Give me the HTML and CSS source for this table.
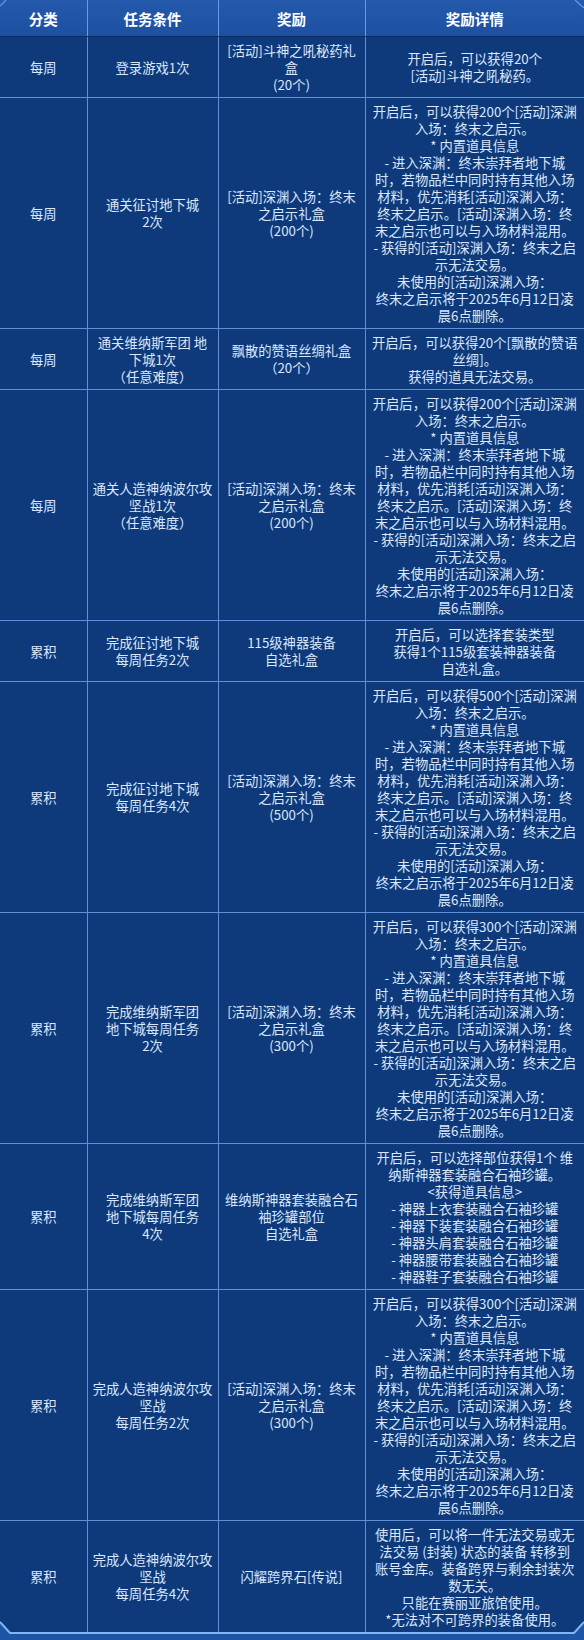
FILE: index.html
```html
<!DOCTYPE html>
<html lang="zh-CN">
<head>
<meta charset="utf-8">
<title>奖励列表</title>
<link rel="stylesheet" href="styles.css">
</head>
<body>
<div class="frame">
  <table class="rewards">
    <colgroup>
      <col class="c-cat">
      <col class="c-cond">
      <col class="c-reward">
      <col class="c-detail">
    </colgroup>
    <thead>
      <tr>
        <th>分类</th>
        <th>任务条件</th>
        <th>奖励</th>
        <th>奖励详情</th>
      </tr>
    </thead>
    <tbody>
      <tr>
        <td>每周</td>
        <td>登录游戏1次</td>
        <td>[活动]斗神之吼秘药礼<br>盒<br>(20个)</td>
        <td>开启后，可以获得20个<br>[活动]斗神之吼秘药。</td>
      </tr>
      <tr>
        <td>每周</td>
        <td>通关征讨地下城<br>2次</td>
        <td>[活动]深渊入场：终末<br>之启示礼盒<br>(200个)</td>
        <td>开启后，可以获得200个[活动]深渊<br>入场：终末之启示。<br>* 内置道具信息<br>- 进入深渊：终末崇拜者地下城<br>时，若物品栏中同时持有其他入场<br>材料，优先消耗[活动]深渊入场：<br>终末之启示。[活动]深渊入场：终<br>末之启示也可以与入场材料混用。<br>- 获得的[活动]深渊入场：终末之启<br>示无法交易。<br>未使用的[活动]深渊入场：<br>终末之启示将于2025年6月12日凌<br>晨6点删除。</td>
      </tr>
      <tr>
        <td>每周</td>
        <td>通关维纳斯军团 地<br>下城1次<br>（任意难度）</td>
        <td>飘散的赞语丝绸礼盒<br>（20个）</td>
        <td>开启后，可以获得20个[飘散的赞语<br>丝绸]。<br>获得的道具无法交易。</td>
      </tr>
      <tr>
        <td>每周</td>
        <td>通关人造神纳波尔攻<br>坚战1次<br>（任意难度）</td>
        <td>[活动]深渊入场：终末<br>之启示礼盒<br>(200个)</td>
        <td>开启后，可以获得200个[活动]深渊<br>入场：终末之启示。<br>* 内置道具信息<br>- 进入深渊：终末崇拜者地下城<br>时，若物品栏中同时持有其他入场<br>材料，优先消耗[活动]深渊入场：<br>终末之启示。[活动]深渊入场：终<br>末之启示也可以与入场材料混用。<br>- 获得的[活动]深渊入场：终末之启<br>示无法交易。<br>未使用的[活动]深渊入场：<br>终末之启示将于2025年6月12日凌<br>晨6点删除。</td>
      </tr>
      <tr>
        <td>累积</td>
        <td>完成征讨地下城<br>每周任务2次</td>
        <td>115级神器装备<br>自选礼盒</td>
        <td>开启后，可以选择套装类型<br>获得1个115级套装神器装备<br>自选礼盒。</td>
      </tr>
      <tr>
        <td>累积</td>
        <td>完成征讨地下城<br>每周任务4次</td>
        <td>[活动]深渊入场：终末<br>之启示礼盒<br>(500个)</td>
        <td>开启后，可以获得500个[活动]深渊<br>入场：终末之启示。<br>* 内置道具信息<br>- 进入深渊：终末崇拜者地下城<br>时，若物品栏中同时持有其他入场<br>材料，优先消耗[活动]深渊入场：<br>终末之启示。[活动]深渊入场：终<br>末之启示也可以与入场材料混用。<br>- 获得的[活动]深渊入场：终末之启<br>示无法交易。<br>未使用的[活动]深渊入场：<br>终末之启示将于2025年6月12日凌<br>晨6点删除。</td>
      </tr>
      <tr>
        <td>累积</td>
        <td>完成维纳斯军团<br>地下城每周任务<br>2次</td>
        <td>[活动]深渊入场：终末<br>之启示礼盒<br>(300个)</td>
        <td>开启后，可以获得300个[活动]深渊<br>入场：终末之启示。<br>* 内置道具信息<br>- 进入深渊：终末崇拜者地下城<br>时，若物品栏中同时持有其他入场<br>材料，优先消耗[活动]深渊入场：<br>终末之启示。[活动]深渊入场：终<br>末之启示也可以与入场材料混用。<br>- 获得的[活动]深渊入场：终末之启<br>示无法交易。<br>未使用的[活动]深渊入场：<br>终末之启示将于2025年6月12日凌<br>晨6点删除。</td>
      </tr>
      <tr>
        <td>累积</td>
        <td>完成维纳斯军团<br>地下城每周任务<br>4次</td>
        <td>维纳斯神器套装融合石<br>袖珍罐部位<br>自选礼盒</td>
        <td>开启后，可以选择部位获得1个 维<br>纳斯神器套装融合石袖珍罐。<br>&lt;获得道具信息&gt;<br>- 神器上衣套装融合石袖珍罐<br>- 神器下装套装融合石袖珍罐<br>- 神器头肩套装融合石袖珍罐<br>- 神器腰带套装融合石袖珍罐<br>- 神器鞋子套装融合石袖珍罐</td>
      </tr>
      <tr>
        <td>累积</td>
        <td>完成人造神纳波尔攻<br>坚战<br>每周任务2次</td>
        <td>[活动]深渊入场：终末<br>之启示礼盒<br>(300个)</td>
        <td>开启后，可以获得300个[活动]深渊<br>入场：终末之启示。<br>* 内置道具信息<br>- 进入深渊：终末崇拜者地下城<br>时，若物品栏中同时持有其他入场<br>材料，优先消耗[活动]深渊入场：<br>终末之启示。[活动]深渊入场：终<br>末之启示也可以与入场材料混用。<br>- 获得的[活动]深渊入场：终末之启<br>示无法交易。<br>未使用的[活动]深渊入场：<br>终末之启示将于2025年6月12日凌<br>晨6点删除。</td>
      </tr>
      <tr>
        <td>累积</td>
        <td>完成人造神纳波尔攻<br>坚战<br>每周任务4次</td>
        <td>闪耀跨界石[传说]</td>
        <td>使用后，可以将一件无法交易或无<br>法交易 (封装) 状态的装备 转移到<br>账号金库。装备跨界与剩余封装次<br>数无关。<br>只能在赛丽亚旅馆使用。<br>*无法对不可跨界的装备使用。</td>
      </tr>
    </tbody>
  </table>
  <svg class="corner-top" width="584" height="12" viewBox="0 0 584 12" aria-hidden="true">
    <line x1="0" y1="6" x2="6" y2="0" stroke="#6d9de0" stroke-width="1.2"/>
    <line x1="575" y1="0" x2="584" y2="8" stroke="#6d9de0" stroke-width="1.2"/>
  </svg>
  <svg class="corner-bottom" width="584" height="14" viewBox="0 0 584 14" aria-hidden="true">
    <polygon points="0,1 10,12 574,12 584,1 584,14 0,14" fill="#1d55a6"/>
    <polyline points="0,1 10,12 574,12 584,1" fill="none" stroke="#82b5f4" stroke-width="2"/>
  </svg>
</div>
</body>
</html>
```

FILE: styles.css
```css
html, body {
  margin: 0;
  padding: 0;
}

body {
  background: #1d55a6;
  font-family: "Noto Sans CJK SC", "Noto Sans", sans-serif;
  width: 584px;
  height: 1640px;
  overflow: hidden;
}

.frame {
  position: relative;
  width: 584px;
  background: #0e3a7b;
  padding-bottom: 3px;
}

.rewards {
  width: 584px;
  border-collapse: collapse;
  table-layout: fixed;
}

.c-cat { width: 87px; }
.c-cond { width: 131px; }
.c-reward { width: 147px; }
.c-detail { width: 219px; }

.rewards th {
  height: 36px;
  padding: 0;
  background: linear-gradient(#2459ab, #1d50a1);
  color: #ffffff;
  font-size: 14.5px;
  font-weight: 700;
  text-align: center;
  vertical-align: middle;
  border-left: 1px solid #6a9ae0;
  border-bottom: 1px solid #0b2d66;
}

.rewards td {
  padding: 4.5px 1px;
  color: #dae7fc;
  font-size: 13.3px;
  line-height: 17px;
  text-align: center;
  vertical-align: middle;
  border: 1px solid #6090da;
  white-space: nowrap;
}

.rewards tr > :first-child {
  border-left: none;
}

.rewards tr > :last-child {
  border-right: none;
}

.rewards tbody tr:last-child td {
  border-bottom: none;
}

.corner-top {
  position: absolute;
  left: 0;
  top: 0;
  display: block;
}

.corner-bottom {
  position: absolute;
  left: 0;
  bottom: 0;
  display: block;
}
```
